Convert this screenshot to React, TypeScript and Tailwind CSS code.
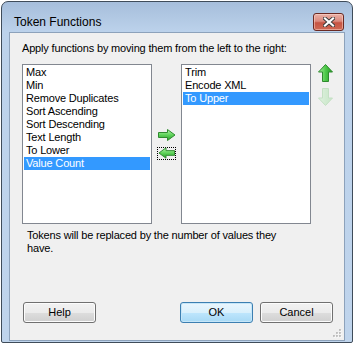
import React from "react";

const font = { fontFamily: '"Liberation Sans", Arial, sans-serif' };

function HArrow({ dir, id }: { dir: "right" | "left"; id: string }) {
  return (
    <svg width="18" height="12" viewBox="0 0 18 12" style={{ transform: dir === "left" ? "scaleX(-1)" : undefined }}>
      <defs>
        <linearGradient id={id} x1="0" y1="0" x2="0" y2="1">
          <stop offset="0" stopColor="#b8f5ae" />
          <stop offset="0.5" stopColor="#5fd35a" />
          <stop offset="1" stopColor="#2a9f2a" />
        </linearGradient>
      </defs>
      <path d="M0.5 3.5 H9.5 V0.5 L17 6 L9.5 11.5 V8.5 H0.5 Z" fill={`url(#${id})`} stroke="#2f8a2f" strokeWidth="1" strokeLinejoin="round" />
    </svg>
  );
}

function VArrow({ dir, disabled, id }: { dir: "up" | "down"; disabled?: boolean; id: string }) {
  return (
    <svg width="15" height="18" viewBox="0 0 15 18" style={{ transform: dir === "down" ? "scaleY(-1)" : undefined }}>
      <defs>
        <linearGradient id={id} x1="0" y1="0" x2="1" y2="0">
          <stop offset="0" stopColor={disabled ? "#e2f2e2" : "#a8f0a0"} />
          <stop offset="0.5" stopColor={disabled ? "#d2ebd2" : "#4fc94a"} />
          <stop offset="1" stopColor={disabled ? "#c9e6c9" : "#239a23"} />
        </linearGradient>
      </defs>
      <path d="M7.5 0.5 L14.5 8 H10.5 V17.5 H4.5 V8 H0.5 Z" fill={`url(#${id})`} stroke={disabled ? "#c4e0c4" : "#2f8a2f"} strokeWidth="1" strokeLinejoin="round" />
    </svg>
  );
}

function ListBox({ items, selected }: { items: string[]; selected: number }) {
  return (
    <div className="w-[130px] h-[160px] bg-white border border-[#828790] p-px flex flex-col">
      {items.map((t, i) => (
        <div
          key={t}
          className={`h-[13px] leading-[13px] pl-[2px] text-[11px] tracking-[-0.17px] whitespace-nowrap ${
            i === selected ? "bg-[#3399ff] text-white" : "text-black"
          }`}
        >
          {t}
        </div>
      ))}
    </div>
  );
}

function Button({ label, def }: { label: string; def?: boolean }) {
  return (
    <div
      className={`w-[73px] h-[21px] rounded-[3px] border flex items-center justify-center text-[11px] text-black ${
        def
          ? "border-[#3c7fb1] bg-[linear-gradient(to_bottom,#eaf6fd_0%,#d9f0fc_50%,#bee6fd_51%,#a7d9f5_100%)] shadow-[inset_0_0_0_1px_#c6e6f8]"
          : "border-[#707070] bg-[linear-gradient(to_bottom,#f2f2f2_0%,#ebebeb_50%,#dddddd_51%,#cfcfcf_100%)] shadow-[inset_0_0_0_1px_#fcfcfc]"
      }`}
    >
      {label}
    </div>
  );
}

export default function App() {
  return (
    <div className="w-[357px] h-[345px] bg-white pt-px pl-px" style={font}>
      <div className="w-[352px] h-[342px] border border-[#3f4c5a] rounded-t-[7px] rounded-b-[2px] bg-[linear-gradient(to_bottom,#a6bedb_0px,#bcd2eb_30px,#bfd4ec_100%)] flex flex-col px-[7px] pb-px overflow-hidden">
        <div className="h-[30px] flex items-start shrink-0">
          <div className="mt-[13px] ml-[5px] text-[12px] leading-[15px] text-black">Token Functions</div>
          <div className="ml-auto mt-[11px] mr-px w-[31px] h-[18px] rounded-[3px] border border-[#6b2a23] bg-[linear-gradient(to_bottom,#eab1a7_0%,#db8a7e_45%,#c65443_55%,#cf6a55_100%)] shadow-[inset_0_0_0_1px_rgba(255,220,210,0.5)] flex items-center justify-center">
            <svg width="12" height="10" viewBox="0 0 12 10">
              <path d="M2 1.5 L10 8.5 M10 1.5 L2 8.5" stroke="#3b3b3b" strokeWidth="4" strokeLinecap="square" />
              <path d="M2 1.5 L10 8.5 M10 1.5 L2 8.5" stroke="#ffffff" strokeWidth="2.2" strokeLinecap="square" />
            </svg>
          </div>
        </div>
        <div className="flex-1 relative bg-[#f0f0f0] border border-[#8da2bb] flex flex-col pl-[12px] pt-[9px] text-[11px] tracking-[-0.17px] text-black">
          <div className="leading-[13px] h-[13px] whitespace-nowrap">Apply functions by moving them from the left to the right:</div>
          <div className="mt-[9px] flex items-start">
            <ListBox
              items={["Max", "Min", "Remove Duplicates", "Sort Ascending", "Sort Descending", "Text Length", "To Lower", "Value Count"]}
              selected={7}
            />
            <div className="w-[29px] h-[160px] flex flex-col items-center justify-center gap-[6px]">
              <div className="pl-px">
                <HArrow dir="right" id="ga" />
              </div>
              <div className="w-[19px] h-[13px] border border-dotted border-black flex items-center justify-center">
                <HArrow dir="left" id="gb" />
              </div>
            </div>
            <ListBox items={["Trim", "Encode XML", "To Upper"]} selected={2} />
            <div className="ml-[7px] flex flex-col gap-[6px]">
              <VArrow dir="up" id="gc" />
              <VArrow dir="down" disabled id="gd" />
            </div>
          </div>
          <div className="mt-[5px] ml-[5px] leading-[13px]">
            Tokens will be replaced by the number of values they
            <br />
            have.
          </div>
          <div className="mt-[47px] flex items-start tracking-normal">
            <div className="ml-px">
              <Button label="Help" />
            </div>
            <div className="ml-[84px]">
              <Button label="OK" def />
            </div>
            <div className="ml-[7px]">
              <Button label="Cancel" />
            </div>
          </div>
          <svg className="absolute right-[2px] bottom-[2px]" width="9" height="9" viewBox="0 0 9 9">
            {[
              [7, 1],
              [7, 4],
              [4, 4],
              [7, 7],
              [4, 7],
              [1, 7],
            ].map(([x, y]) => (
              <g key={`${x}-${y}`}>
                <rect x={x} y={y} width="1.5" height="1.5" fill="#ffffff" />
                <rect x={x - 0.8} y={y - 0.8} width="1.5" height="1.5" fill="#a0a0a0" />
              </g>
            ))}
          </svg>
        </div>
      </div>
    </div>
  );
}
